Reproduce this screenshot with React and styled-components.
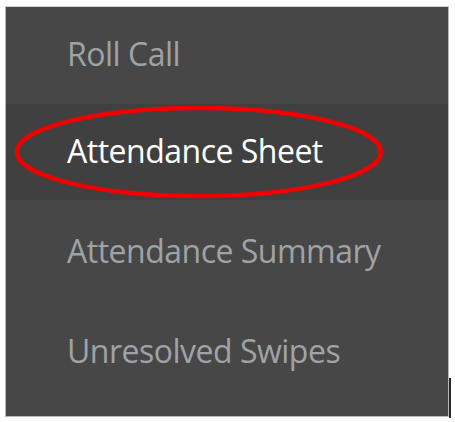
import React from "react";
import styled, { createGlobalStyle } from "styled-components";

const Global = createGlobalStyle`
  html, body { margin: 0; padding: 0; background: #ffffff; }
  body { width: 455px; height: 422px; overflow: hidden; }
`;

const Page = styled.div`
  padding: 6px 6px 5px 5px;
  box-sizing: border-box;
  width: 455px;
  height: 422px;
`;

const Panel = styled.nav`
  position: relative;
  box-sizing: border-box;
  height: 100%;
  background: #474747;
  border: 1px solid #b8b8b8;
  border-top-color: #d0d0d0;
  display: flex;
  flex-direction: column;
`;

const Item = styled.div`
  position: relative;
  height: ${(p) => p.$h || 98}px;
  display: flex;
  align-items: center;
  padding-left: 61px;
  padding-bottom: 4px;
  box-sizing: border-box;
  background: ${(p) => (p.$active ? "#404040" : "transparent")};
  color: ${(p) => (p.$active ? "#ffffff" : "#9fa3a6")};
  font-family: "Open Sans", "Noto Sans", sans-serif;
  font-size: 32px;
  letter-spacing: -0.5px;
`;

const Label = styled.span`
  position: relative;
`;

const Ring = styled.svg`
  position: absolute;
  left: 8px;
  top: 0;
  overflow: visible;
`;

const Tick = styled.div`
  position: absolute;
  right: -3px;
  bottom: -2px;
  width: 2px;
  height: 40px;
  background: #2a2a2a;
`;

export default function App() {
  return (
    <>
      <Global />
      <Page>
        <Panel>
          <Item $h={97}><Label>Roll Call</Label></Item>
          <Item $active $h={96}>
            <Ring width="370" height="96">
              <ellipse cx="185" cy="48" rx="182" ry="44" fill="none" stroke="#f20000" strokeWidth="4.5" />
            </Ring>
            <Label>Attendance Sheet</Label>
          </Item>
          <Item $h={104}><Label>Attendance Summary</Label></Item>
          <Item $h={96}><Label>Unresolved Swipes</Label></Item>
          <Tick />
        </Panel>
      </Page>
    </>
  );
}
